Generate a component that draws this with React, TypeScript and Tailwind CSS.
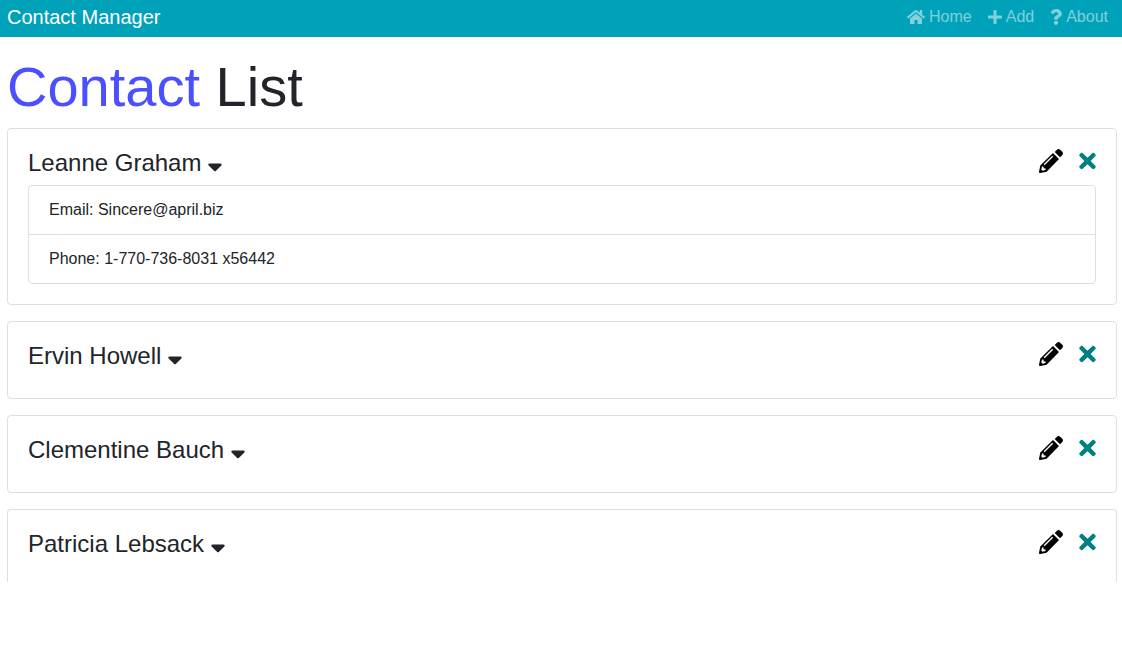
import { useState } from "react";
import { FaHome, FaPlus, FaQuestion, FaSortDown, FaTimes } from "react-icons/fa";

type ContactInfo = { name: string; email: string; phone: string };

const contacts: ContactInfo[] = [
  { name: "Leanne Graham", email: "Sincere@april.biz", phone: "1-770-736-8031 x56442" },
  { name: "Ervin Howell", email: "Shanna@melissa.tv", phone: "010-692-6593 x09125" },
  { name: "Clementine Bauch", email: "Nathan@yesenia.net", phone: "1-463-123-4447" },
  { name: "Patricia Lebsack", email: "Julianne.OConner@kory.org", phone: "493-170-9623 x156" },
];

function PencilIcon() {
  return (
    <svg viewBox="0 0 24 24" fill="currentColor" aria-hidden="true" className="size-6">
      <path d="M23.3 6 21 8.3 15.7 3 18 .7c.9-.9 2.300-.9 3.200 0l2.100 2.100c.9.9.9 2.300 0 3.200Z" />
      <path
        fillRule="evenodd"
        d="M14 4 20 10 7.600 22.700 1.200 24c-.7.1-1.300-.4-1.200-1.200L1.300 16.400 14 4ZM5.600 16.200 14.200 7.800 13.200 6.800 4.700 15.200ZM3 17.600 2.300 20.600 3.500 21.700 6.600 21.100 6.500 19.500 4.600 19.300 4.500 17.500Z"
      />
    </svg>
  );
}

function Header() {
  return (
    <nav className="flex h-[37px] items-center justify-between bg-[#00a2b9] pr-[14px] pb-1 pl-[7px]">
      <a href="#home" className="text-xl leading-[30px] text-white">
        Contact Manager
      </a>
      <ul className="flex gap-4 text-base leading-6 text-white/50">
        <li>
          <a href="#home" className="flex items-center gap-1">
            <FaHome className="h-4 w-[18px]" />
            Home
          </a>
        </li>
        <li>
          <a href="#add" className="flex items-center gap-1">
            <FaPlus className="h-4 w-[14px]" />
            Add
          </a>
        </li>
        <li>
          <a href="#about" className="flex items-center gap-1">
            <FaQuestion className="h-4 w-3" />
            About
          </a>
        </li>
      </ul>
    </nav>
  );
}

function Contact({ contact, initiallyOpen }: { contact: ContactInfo; initiallyOpen: boolean }) {
  const [open, setOpen] = useState(initiallyOpen);
  return (
    <li className="rounded border border-[#dfdfdf] p-5 last:rounded-b-none last:border-b-0 last:pb-4">
      <div className="mb-2 flex h-7 items-center justify-between">
        <h2 className="flex items-center gap-[6px] text-2xl leading-7">
          {contact.name}
          <button
            type="button"
            aria-label={`Toggle details of ${contact.name}`}
            aria-expanded={open}
            onClick={() => setOpen(!open)}
            className="cursor-pointer pb-0.5"
          >
            <FaSortDown className="h-6 w-4" />
          </button>
        </h2>
        <div className="flex items-center gap-4 pb-1">
          <a href="#edit" aria-label={`Edit ${contact.name}`} className="text-black">
            <PencilIcon />
          </a>
          <button
            type="button"
            aria-label={`Delete ${contact.name}`}
            className="cursor-pointer text-[#008080]"
          >
            <FaTimes className="h-6 w-[17px]" />
          </button>
        </div>
      </div>
      {open && (
        <ul className="divide-y divide-[#dfdfdf] rounded border border-[#dfdfdf] text-base leading-6">
          <li className="px-5 py-3">Email: {contact.email}</li>
          <li className="px-5 py-3">Phone: {contact.phone}</li>
        </ul>
      )}
    </li>
  );
}

export default function App() {
  return (
    <div className="bg-white font-['Liberation_Sans',Arial,sans-serif] text-[#212529]">
      <Header />
      <main className="pt-4 pr-[5px] pl-[7px]">
        <h1 className="mb-2 text-[56px] leading-[67px]">
          <span className="text-[#4b50ff]">Contact</span> List
        </h1>
        <ul className="flex flex-col gap-4">
          {contacts.map((contact, index) => (
            <Contact key={contact.name} contact={contact} initiallyOpen={index === 0} />
          ))}
        </ul>
      </main>
    </div>
  );
}
